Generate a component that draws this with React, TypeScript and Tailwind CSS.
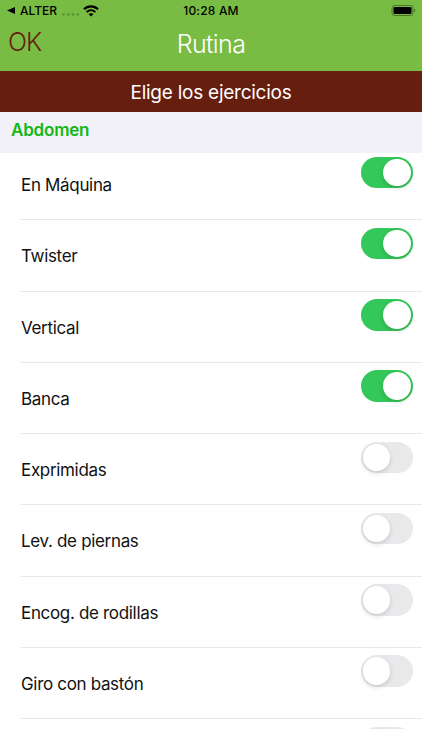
import { useState } from "react";
import clsx from "clsx";

interface Exercise {
    name: string;
    selected: boolean;
}

const ABDOMEN: Exercise[] = [
    { name: "En Máquina", selected: true },
    { name: "Twister", selected: true },
    { name: "Vertical", selected: true },
    { name: "Banca", selected: true },
    { name: "Exprimidas", selected: false },
    { name: "Lev. de piernas", selected: false },
    { name: "Encog. de rodillas", selected: false },
    { name: "Giro con bastón", selected: false },
    { name: "", selected: false },
];

function StatusBar() {
    return (
        <div className="grid h-[21px] grid-cols-3 items-center px-[7px] text-[12px] font-medium text-black">
            <div className="flex items-center">
                <svg className="h-[7px] w-[8px]" viewBox="0 0 8 7">
                    <path d="M0 3.5L8 0v7z" fill="currentColor" />
                </svg>
                <span className="ml-[5px] w-[37px] whitespace-nowrap">ALTER</span>
                <svg className="mt-[7px] ml-[5px] h-[3px] w-[18px]" viewBox="0 0 18 3" fill="#5d9a35">
                    <circle cx="1.5" cy="1.5" r="1.4" />
                    <circle cx="6.3" cy="1.5" r="1.4" />
                    <circle cx="11.1" cy="1.5" r="1.4" />
                    <circle cx="15.9" cy="1.5" r="1.4" />
                </svg>
                <svg className="ml-[3px] h-[12px] w-[16px]" viewBox="0 0 16 12" fill="none" stroke="currentColor">
                    <path d="M1 4.3C5 .4 11 .4 15 4.3" strokeWidth="2.1" />
                    <path d="M3.6 7.1C6.2 4.6 9.8 4.6 12.4 7.1" strokeWidth="2" />
                    <path d="M8 11.6L5.5 9.1C7 7.8 9 7.8 10.5 9.1z" fill="currentColor" stroke="none" />
                </svg>
            </div>
            <span className="text-center tracking-[0.2px] whitespace-nowrap">10:28 AM</span>
            <svg className="mr-[-1px] ml-auto h-[11px] w-[25px]" viewBox="0 0 25 11">
                <rect x="1" y="0.5" width="21" height="10" rx="2.5" fill="none" stroke="#4a7529" />
                <rect x="2.5" y="2" width="18" height="7" rx="1.2" fill="#000" />
                <path d="M23 4v3c.8-.2 1.3-.8 1.3-1.5S23.8 4.2 23 4z" fill="#4a7529" />
            </svg>
        </div>
    );
}

function Toggle({ on, onClick }: { on: boolean; onClick: () => void }) {
    return (
        <button
            role="switch"
            aria-checked={on}
            onClick={onClick}
            className={clsx(
                "flex h-[31.5px] w-[52px] items-center rounded-full px-[2px]",
                on ? "justify-end bg-[#34c759]" : "justify-start bg-[#e9e9eb]"
            )}
        >
            <span className="size-[27.5px] rounded-full bg-white shadow-[0_2px_5px_rgba(0,0,0,0.15)]" />
        </button>
    );
}

export default function App() {
    const [exercises, setExercises] = useState(ABDOMEN);

    const toggle = (index: number) => {
        setExercises(exercises.map((e, i) => (i === index ? { ...e, selected: !e.selected } : e)));
    };

    return (
        <div className="flex h-[750px] w-[422px] flex-col overflow-hidden bg-white pb-[21px] font-['Inter',sans-serif]">
            <header className="h-[71px] shrink-0 bg-[#79bc43]">
                <StatusBar />
                <div className="grid h-[46px] grid-cols-3 items-center px-2">
                    <button className="-mt-[3px] text-left text-[25px] leading-none font-light tracking-[-0.9px] text-[#661e0e]">OK</button>
                    <h1 className="mt-px text-center text-[25px] leading-none font-light tracking-[-0.6px] text-white">Rutina</h1>
                </div>
            </header>

            <div className="flex h-[41px] shrink-0 items-center justify-center bg-[#661e0e] pt-[3px] text-[19px] tracking-[-0.25px] text-white">
                Elige los ejercicios
            </div>

            <h2 className="z-10 h-[41px] shrink-0 bg-[#f2f1f8] pt-[5px] pl-[11px] text-[17px] leading-[26px] font-semibold tracking-[-0.2px] text-[#14b814]">
                Abdomen
            </h2>

            {/* the list is scrolled a little under the section header */}
            <ul className="-mt-[4px] min-h-0 flex-1 overflow-hidden">
                {exercises.map((exercise, i) => (
                    <li key={i} className="flex h-[71.28px] items-start justify-between pl-[21px]">
                        <div className="flex h-full flex-1 items-center border-b border-[#e8e8e8] pt-[3.2px] text-[17px] tracking-[-0.33px] text-[#111]">
                            {exercise.name}
                        </div>
                        <div className="h-full border-b border-[#e8e8e8] pt-[7.5px] pr-[9.5px]">
                            <Toggle on={exercise.selected} onClick={() => toggle(i)} />
                        </div>
                    </li>
                ))}
            </ul>
        </div>
    );
}
